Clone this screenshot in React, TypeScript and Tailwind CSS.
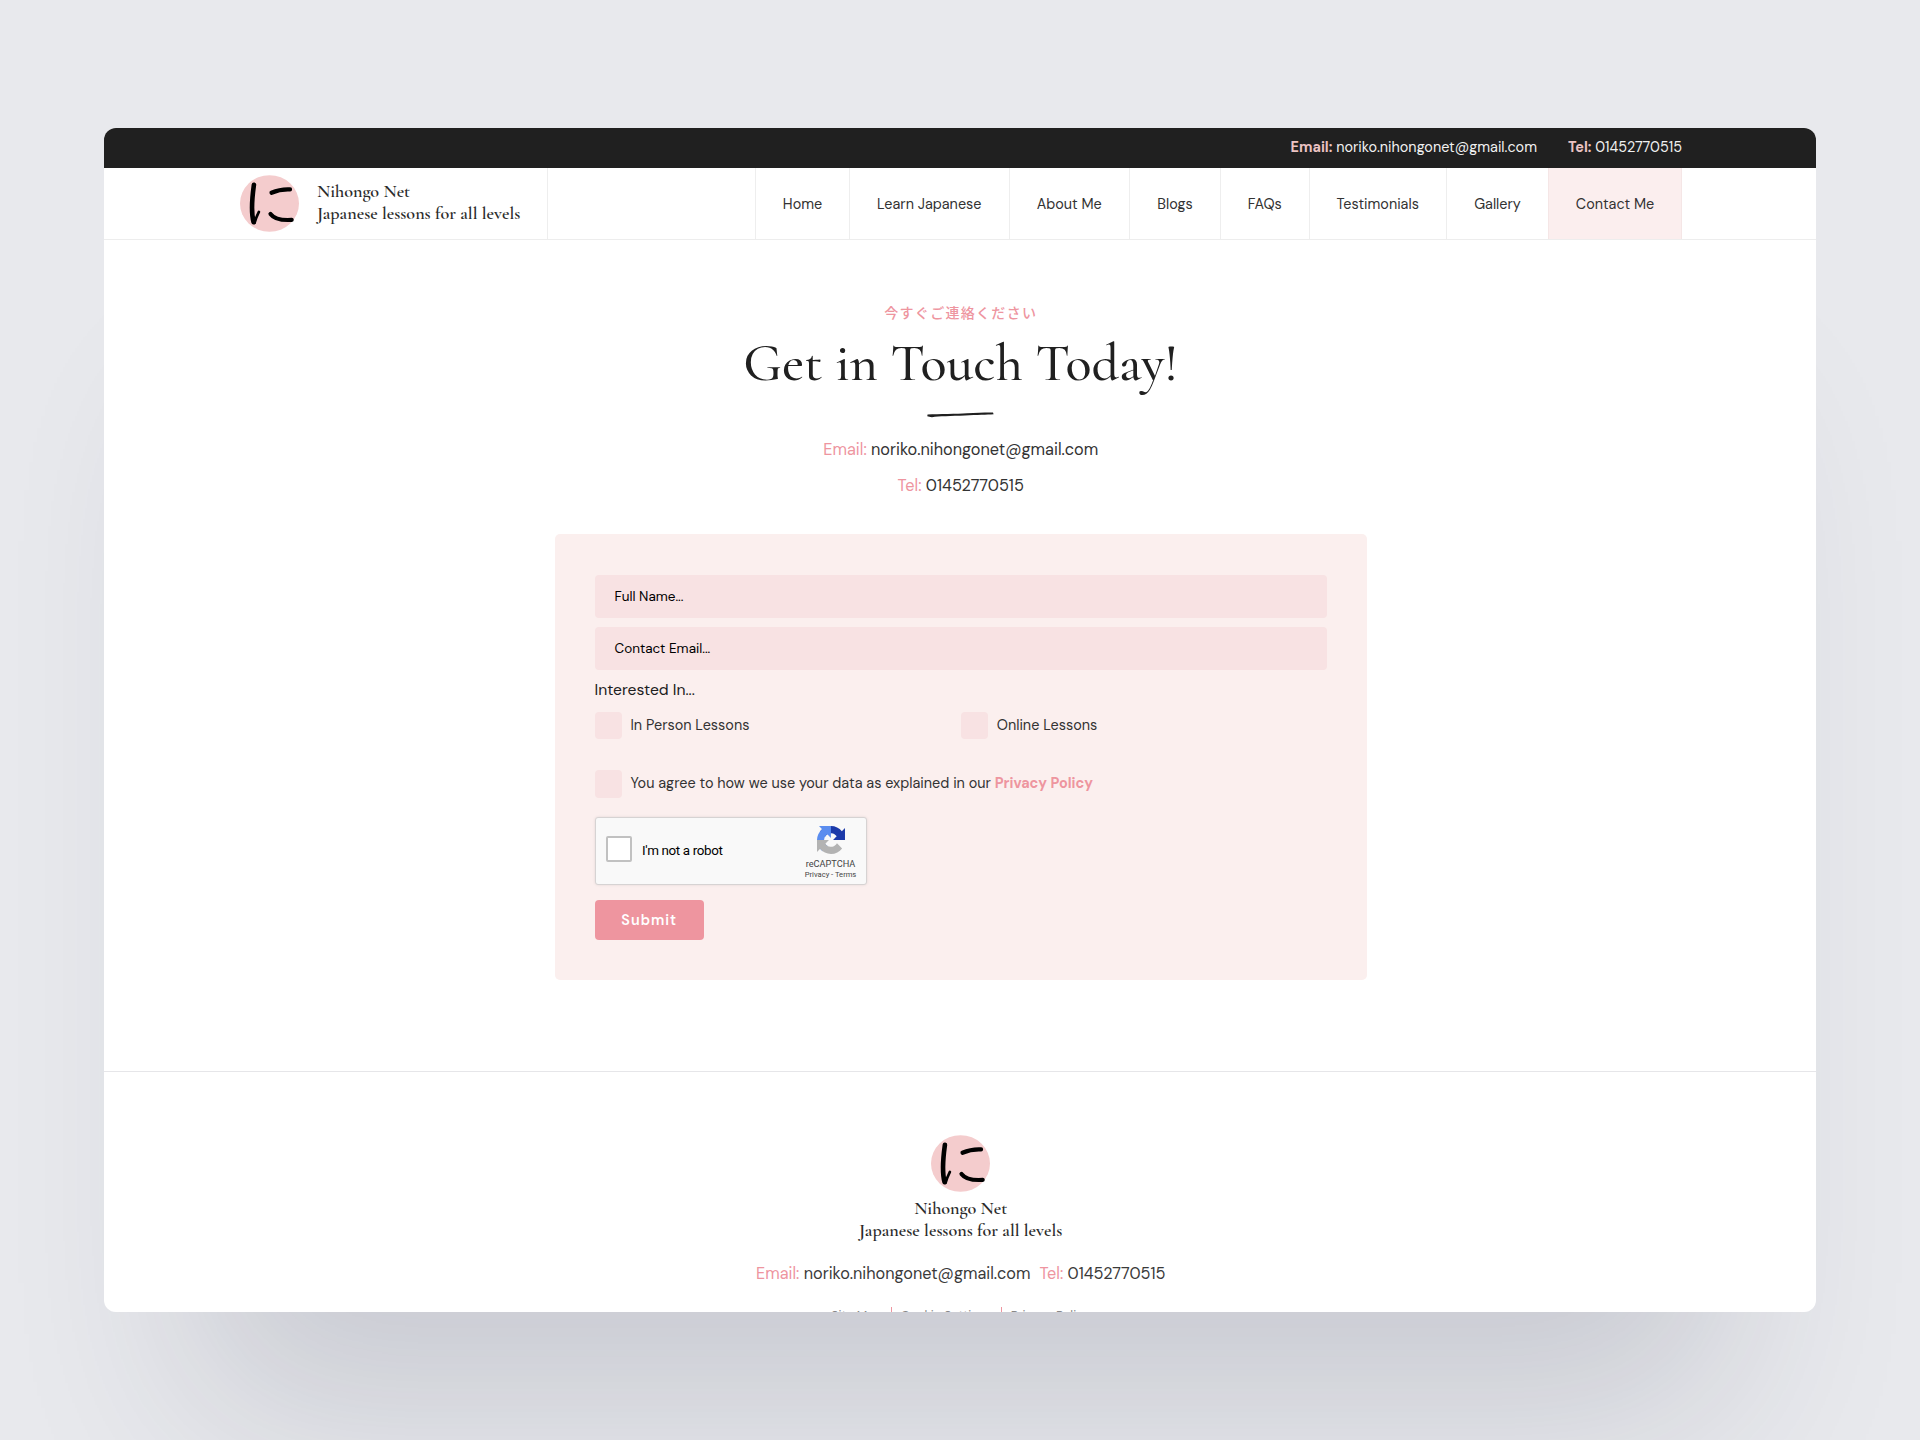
import type { ReactNode } from "react";

const sans = "font-['DM_Sans','Inter',sans-serif]";
const serif = "font-['Cormorant_Garamond','Liberation_Serif',serif]";

const nav = [
  { label: "Home", width: "w-[94px]" },
  { label: "Learn Japanese", width: "w-[159.5px]" },
  { label: "About Me", width: "w-[120.5px]" },
  { label: "Blogs", width: "w-[91px]" },
  { label: "FAQs", width: "w-[88.5px]" },
  { label: "Testimonials", width: "w-[137.5px]" },
  { label: "Gallery", width: "w-[102px]" },
];

function Logo() {
  return (
    <svg viewBox="30 30 178 171" className="h-[57px] w-[59px] shrink-0" fill="none" stroke="#000" strokeLinecap="round" strokeLinejoin="round">
      <ellipse cx="119" cy="115.5" rx="89" ry="85.5" fill="#f4cccd" stroke="none" />
      <path d="M72 59C68 88 61 135 71 172" strokeWidth="14" />
      <path d="M74 174C77 163 82 151 87 141" strokeWidth="8" />
      <path d="M125 83C141 76 160 72 181 73" strokeWidth="12.5" />
      <path d="M122 147C133 162 156 167 186 165" strokeWidth="12.5" />
    </svg>
  );
}

function Brand() {
  return (
    <div className={`${serif} text-[18.1px] leading-[22px] font-semibold text-[#2b2b2b]`}>
      <div>Nihongo Net</div>
      <div>Japanese lessons for all levels</div>
    </div>
  );
}

function Recaptcha() {
  return (
    <div className="mt-[19px] flex h-[68.5px] w-[272.5px] items-center rounded-[3px] border border-[#d6d3d3] bg-[#f9f9f9] pr-[9.5px] pl-[10.5px] shadow-[0_0_3px_rgba(0,0,0,0.1)]">
      <div className="mb-[3px] size-[26px] rounded-[2px] border-2 border-[#c1c1c1] bg-white" />
      <span className="ml-[10px] font-['Roboto',sans-serif] text-[13.4px] tracking-[-0.35px] text-black">I'm not a robot</span>
      <div className="ml-auto flex w-[52px] flex-col items-center pt-[5px] font-['Roboto',sans-serif] text-[#444]">
        <svg viewBox="0 0 64 64" className="size-[28px]">
          <path fill="#1c3aa9" d="M64 31.955l-.033-1.37V4.687l-7.16 7.16C50.948 4.674 42.033.093 32.05.093c-10.4 0-19.622 4.96-25.458 12.64l11.736 11.86a15.55 15.55 0 0 1 4.754-5.334c2.05-1.6 4.952-2.906 8.968-2.906.485 0 .86.057 1.135.163 4.976.393 9.288 3.14 11.828 7.124l-8.307 8.307L64 31.953" />
          <path fill="#5b8def" d="M31.862.094l-1.37.033H4.594l7.16 7.16C4.58 13.147 0 22.06 0 32.046c0 10.4 4.96 19.622 12.64 25.458L24.5 45.768a15.55 15.55 0 0 1-5.334-4.754c-1.6-2.05-2.906-4.952-2.906-8.968 0-.485.057-.86.163-1.135.393-4.976 3.14-9.288 7.124-11.828l8.307 8.307L31.86.095" />
          <path fill="#b3b3b3" d="M.001 32.045l.033 1.37v25.898l7.16-7.16c5.86 7.173 14.774 11.754 24.76 11.754 10.4 0 19.622-4.96 25.458-12.64l-11.736-11.86a15.55 15.55 0 0 1-4.754 5.334c-2.05 1.6-4.952 2.906-8.968 2.906-.485 0-.86-.057-1.135-.163-4.976-.393-9.288-3.14-11.828-7.124l8.307-8.307c-10.522.04-22.4.066-27.295-.005" />
        </svg>
        <span className="mt-[4px] text-[9.2px] leading-[12px]">reCAPTCHA</span>
        <span className="text-[7.6px] leading-[10px] whitespace-nowrap">Privacy - Terms</span>
      </div>
    </div>
  );
}

function Check({ children, className }: { children: ReactNode; className?: string }) {
  return (
    <label className={`flex items-center gap-[9px] ${className ?? ""}`}>
      <span className="h-[27.3px] w-[27px] rounded-[4px] bg-[#f8e2e3]" />
      <span className="text-[14.43px] text-[#333]">{children}</span>
    </label>
  );
}

function Field({ label, className }: { label: string; className?: string }) {
  return (
    <div className={`flex h-[43px] items-center rounded-[4px] bg-[#f8e2e3] pt-[2px] pl-[20px] text-[13.5px] text-black ${className ?? ""}`}>{label}</div>
  );
}

export default function App() {
  return (
    <div className={`${sans} h-[1440px] w-[1920px] overflow-hidden bg-[#e8e9ed] pt-[128px] pl-[104px]`}>
      <div className="h-[1184px] w-[1712px] rounded-[12px] shadow-[0_192px_180px_-96px_rgba(36,44,68,0.16)]">
        <div className="h-full overflow-hidden rounded-[12px] bg-white">
          <div className="flex h-[39.5px] items-center justify-end bg-[#202020] pr-[134px] text-[14.4px] text-[#f1f1f1]">
            <span><b className="font-bold text-[#ecc3c3]">Email:</b> noriko.nihongonet@gmail.com</span>
            <span className="ml-[31px]"><b className="font-bold text-[#ecc3c3]">Tel:</b> 01452770515</span>
          </div>

          <header className="flex h-[72.5px] border-b border-[#ededed] pr-[134px] pl-[136px]">
            <div className="flex w-[308px] items-center gap-[18px] border-r border-[#eeeeee]">
              <Logo />
              <div className="pb-[2px]"><Brand /></div>
            </div>
            <nav className="ml-auto flex items-stretch text-[14.4px] text-[#333]">
              {nav.map((n) => (
                <a key={n.label} className={`${n.width} flex items-center justify-center border-l border-[#eeeeee] pt-[2.5px]`}>{n.label}</a>
              ))}
              <a className="flex w-[134px] items-center justify-center border-x border-[#f5e6e6] bg-[#fbeeee] pt-[2.5px]">Contact Me</a>
            </nav>
          </header>

          <main className="flex h-[831px] flex-col items-center pt-[61.5px] pl-[1.5px]">
            <p className="h-[20px] font-['Noto_Sans_CJK_JP',sans-serif] text-[14px] leading-[20px] font-medium tracking-[1.3px] text-[#ee959f]">今すぐご連絡ください</p>
            <h1 className={`${serif} mt-[11.5px] text-[54px] leading-[60px] font-medium text-[#202020]`}>Get in Touch Today!</h1>
            <svg viewBox="0 0 67 6" className="mt-[18.5px] h-[6px] w-[67px] shrink-0">
              <path d="M.5 2.4C12 2.2 30 2 40 1.3C50 .7 60 .5 66 .6L66.6 2.2C60 2.8 50 2.7 38 3.5C24 4 12 4.2 5 5.2C3 5.1 1.5 4.7.3 4.3Z" fill="#202020" />
            </svg>
            <p className="mt-[20.5px] text-[16.3px] leading-[24px] text-[#333]"><span className="text-[#ee959f]">Email:</span> noriko.nihongonet@gmail.com</p>
            <p className="mt-[12px] text-[16.3px] leading-[24px] text-[#333]"><span className="text-[#ee959f]">Tel:</span> 01452770515</p>

            <form className="mt-[36px] h-[446px] w-[811.5px] shrink-0 rounded-[5px] bg-[#fbefee] pt-[40.5px] pr-[39.5px] pl-[39.5px]">
              <Field label="Full Name..." />
              <Field label="Contact Email..." className="mt-[9.5px]" />
              <p className="mt-[7.7px] text-[15.7px] leading-[24px] text-[#202020]">Interested In...</p>
              <div className="mt-[10.3px] grid grid-cols-2">
                <Check>In Person Lessons</Check>
                <Check>Online Lessons</Check>
              </div>
              <Check className="mt-[31px]">
                You agree to how we use your data as explained in our <span className="font-bold text-[#ee959f]">Privacy Policy</span>
              </Check>
              <Recaptcha />
              <button type="button" className="mt-[15px] flex h-[39.5px] w-[109.5px] items-center justify-center rounded-[4px] bg-[#ee959f] pt-px text-[14.4px] font-semibold tracking-[1px] text-white">Submit</button>
            </form>
          </main>

          <footer className="flex flex-col items-center border-t-[1.5px] border-[#e6e6e9] pt-[63px] pl-[1.5px] text-center">
            <Logo />
            <div className="mt-[5px]"><Brand /></div>
            <p className="mt-[20.5px] text-[16.25px] leading-[24px] text-[#3a3a3a]">
              <span className="text-[#ee959f]">Email:</span> noriko.nihongonet@gmail.com
              <span className="ml-[9px] text-[#ee959f]">Tel:</span> 01452770515
            </p>
            <div className="mt-[21.5px] flex text-[12.5px] leading-[20px] text-[#888]">
              <span className="-mt-px px-[9px]">Site Map</span>
              <span className="border-l border-[#ee959f] px-[9px] leading-[18px]">Cookie Settings</span>
              <span className="border-l border-[#ee959f] px-[9px] leading-[18px]">Privacy Policy</span>
            </div>
          </footer>
        </div>
      </div>
    </div>
  );
}
